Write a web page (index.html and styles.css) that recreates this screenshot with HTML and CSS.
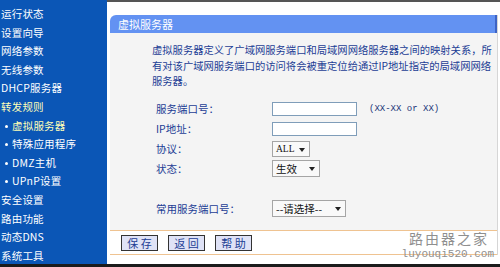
FILE: index.html
```html
<!DOCTYPE html>
<html lang="zh-CN">
<head>
<meta charset="UTF-8">
<title>虚拟服务器</title>
<link rel="stylesheet" href="styles.css">
</head>
<body>
<div class="page">
    <ul class="menu">
        <li>运行状态</li>
        <li>设置向导</li>
        <li>网络参数</li>
        <li>无线参数</li>
        <li>DHCP服务器</li>
        <li class="on">转发规则</li>
        <li class="sub on">虚拟服务器</li>
        <li class="sub">特殊应用程序</li>
        <li class="sub">DMZ主机</li>
        <li class="sub">UPnP设置</li>
        <li>安全设置</li>
        <li>路由功能</li>
        <li>动态DNS</li>
        <li>系统工具</li>
    </ul>
    <div class="main">
        <div class="panel">
            <div class="title">虚拟服务器</div>
            <div class="body">
                <p class="desc">虚拟服务器定义了广域网服务端口和局域网网络服务器之间的映射关系，所有对该广域网服务端口的访问将会被重定位给通过IP地址指定的局域网网络服务器。</p>
                <div class="row">
                    <span class="label">服务端口号：</span>
                    <span class="input"></span>
                    <span class="hint">(XX-XX or XX)</span>
                </div>
                <div class="row">
                    <span class="label">IP地址：</span>
                    <span class="input"></span>
                </div>
                <div class="row">
                    <span class="label">协议：</span>
                    <span class="sel sel-all">ALL<i class="arr"></i></span>
                </div>
                <div class="row">
                    <span class="label">状态：</span>
                    <span class="sel sel-state">生效<i class="arr"></i></span>
                </div>
                <div class="row common">
                    <span class="label">常用服务端口号：</span>
                    <span class="sel sel-port">--请选择--<i class="arr"></i></span>
                </div>
            </div>
            <div class="btns">
                <span class="btn">保 存</span>
                <span class="btn">返 回</span>
                <span class="btn">帮 助</span>
            </div>
        </div>
        <div class="mark">
            <p class="mark-cn">路由器之家</p>
            <p class="mark-en">luyouqi520.com</p>
        </div>
    </div>
</div>
<div class="bottom"></div>
</body>
</html>
```
FILE: styles.css
```css
*{margin: 0; padding: 0;}
body{
    background: #fff;
    font-family: "Noto Sans CJK SC", "Liberation Sans", sans-serif;
    font-size: 10.5px;
}
.page{
    display: flex;
    height: 264px;
    overflow: hidden;
}
.menu{
    width: 107px;
    flex-shrink: 0;
    background: #0b56b6;
    list-style: none;
    padding-top: 5px;
}
.menu li{
    height: 18.6px;
    line-height: 18.6px;
    color: #fff;
    padding-left: 1px;
    white-space: nowrap;
    letter-spacing: 0.2px;
}
.menu li.sub{
    padding-left: 12px;
    position: relative;
}
.menu li.sub:before{
    content: "";
    position: absolute;
    left: 5px;
    top: 8px;
    width: 3px;
    height: 3px;
    background: #fff;
    border-radius: 50%;
}
.menu li.on{
    color: #ffffb8;
}
.main{
    flex: 1;
    border-top: 2px solid #555;
    padding: 13px 3px 0 3px;
    position: relative;
}
.panel{
    border-right: 1px solid #d6d6d6;
}
.title{
    height: 18px;
    line-height: 18px;
    background: #6392f2;
    border-radius: 6px 0 0 0;
    border-right: 2px solid #3d63c4;
    color: #fff;
    padding-left: 8px;
    font-size: 11px;
}
.body{
    height: 197px;
    background: #f4f4f4;
    padding: 9px 0 0 42px;
    box-sizing: border-box;
    color: #1c3d94;
}
.desc{
    line-height: 15.5px;
    width: 345px;
    font-size: 10.3px;
    margin-bottom: 10px;
}
.row{
    display: flex;
    align-items: center;
    height: 20px;
    padding-left: 4px;
}
.row.common{
    margin-top: 20px;
}
.label{
    width: 116px;
    flex-shrink: 0;
}
.input{
    width: 85px;
    height: 14px;
    border: 1px solid #7f9db9;
    background: #fff;
    box-sizing: border-box;
}
.hint{
    margin-left: 12px;
    font-family: "Liberation Mono", monospace;
    font-size: 9px;
    color: #1a3478;
}
.sel{
    display: flex;
    align-items: center;
    height: 17px;
    border: 1px solid #a5a5a5;
    background: #f9f9f9;
    box-sizing: border-box;
    color: #111;
    padding-left: 3px;
    position: relative;
}
.sel-all{
    width: 38px;
    height: 16px;
    font-family: "Liberation Serif", serif;
    font-size: 9.5px;
}
.sel-state{
    width: 48px;
}
.sel-port{
    width: 74px;
}
.arr{
    position: absolute;
    right: 4px;
    top: 6px;
    border-left: 3px solid transparent;
    border-right: 3px solid transparent;
    border-top: 4px solid #222;
}
.btns{
    height: 23px;
    border-top: 1px solid #efc391;
    border-bottom: 1px solid #efc391;
    display: flex;
    align-items: center;
    gap: 10px;
    padding-left: 11px;
}
.btn{
    width: 37px;
    height: 16px;
    line-height: 14px;
    box-sizing: border-box;
    border: 1px solid #333;
    background: #dfe2f6;
    color: #1c3d94;
    text-align: center;
    font-size: 11px;
}
.mark{
    position: absolute;
    right: 7px;
    bottom: 3px;
    text-align: right;
    color: #8f8f8f;
}
.mark-cn{
    font-family: "Noto Sans CJK SC", serif;
    font-size: 14px;
    line-height: 20px;
    letter-spacing: 2px;
    padding-right: 5px;
}
.mark-en{
    font-family: "Liberation Mono", monospace;
    font-size: 11px;
    line-height: 13px;
}
.bottom{
    height: 3px;
    background: #1b1b1b;
}
```
